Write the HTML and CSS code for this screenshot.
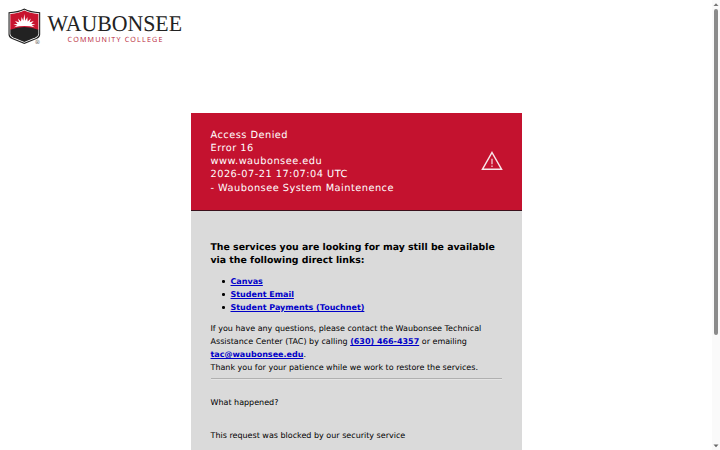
FILE: index.html
```
<!DOCTYPE html>
<html lang="en">
<head>
<meta charset="utf-8">
<title>Access Denied</title>
<link rel="stylesheet" href="styles.css">
</head>
<body>
<div class="page">
  <header class="brand">
    <svg class="logo" width="190" height="42" viewBox="8 7 190 42" role="img" aria-label="Waubonsee Community College">
      <path d="M8.500 12.200Q18 11.700 24.300 8.600Q30.500 11.700 40.200 12.200V34.500Q40 37.500 36.500 39L24.300 43.900L12 39Q8.700 37.500 8.500 34.500Z" fill="#222"/>
      <path d="M9.600 13.200Q18.500 12.700 24.300 9.700Q30.200 12.700 39.100 13.200V34.300Q38.900 36.800 36.200 38L24.300 42.800L12.400 38Q9.800 36.800 9.600 34.300Z" fill="#fff"/>
      <path d="M10.300 13.900Q18.800 13.200 24.300 10.400Q29.900 13.200 38.400 13.900V30H10.300Z" fill="#c8142f"/>
      <path d="M14 27.200L17 25.600L13.300 24.300L17.600 23.900L15 20.900L19 22.200L18 18.500L21 21.400L21.600 17L23.300 20.700L24.300 14L25.400 20.700L27.300 17L27.700 21.400L30.800 18.500L29.700 22.200L33.700 20.900L31.200 23.900L35.400 24.300L31.800 25.600L34.800 27.200Q24.300 25 14 27.200Z" fill="#fff"/>
      <path d="M10.300 29.800Q24.300 24.300 38.400 29.800V34Q38.100 36.300 35.700 37.300L24.300 41.900L12.900 37.300Q10.600 36.300 10.300 34Z" fill="#222"/>
      <text class="mark" x="35.300" y="43.500">®</text>
      <text class="name" x="47.500" y="30.800" textLength="134.500" lengthAdjust="spacingAndGlyphs">WAUBONSEE</text>
      <text class="sub" x="67.500" y="42.200" textLength="95">COMMUNITY COLLEGE</text>
    </svg>
  </header>
  <main class="card">
    <section class="alert">
      <div class="alert-text">
        <div>Access Denied</div>
        <div>Error 16</div>
        <div>www.waubonsee.edu</div>
        <div>2026-07-21 17:07:04 UTC</div>
        <div class="reason">- Waubonsee System Maintenence</div>
      </div>
      <svg class="warning" width="22" height="20" viewBox="0 0 22 20"><path d="M11 1.500L20.500 18.200H1.500Z" fill="none" stroke="#f8e6e9" stroke-width="1.500"/><path d="M11 7.700V13.300M11 14.500V16" stroke="#f3ccd3" stroke-width="1.300"/></svg>
    </section>
    <section class="details">
      <h1>The services you are looking for may still be available<br>via the following direct links:</h1>
      <ul>
        <li><a href="#">Canvas</a></li>
        <li><a href="#">Student Email</a></li>
        <li><a href="#">Student Payments (Touchnet)</a></li>
      </ul>
      <p>If you have any questions, please contact the Waubonsee Technical<br>Assistance Center (TAC) by calling <a href="#">(630) 466-4357</a> or emailing<br><a href="#">tac@waubonsee.edu</a>.<br>Thank you for your patience while we work to restore the services.</p>
      <hr>
      <p class="question">What happened?</p>
      <p class="answer">This request was blocked by our security service</p>
    </section>
  </main>
</div>
<div class="scrollbar">
  <svg width="8" height="9" viewBox="0 0 8 9"><path d="M1.500 6L4 3.200L6.500 6Z" fill="#777"/></svg>
  <div class="thumb"></div>
  <svg class="down" width="8" height="9" viewBox="0 0 8 9"><path d="M1.500 3.500L4 6.200L6.500 3.500Z" fill="#666"/></svg>
</div>
</body>
</html>
```
FILE: styles.css
```
* { box-sizing: border-box; }
body {
  margin: 0;
  height: 450px;
  display: flex;
  overflow: hidden;
  background: #fff;
  color: #000;
  font: 8px/13px "DejaVu Sans", sans-serif;
  text-rendering: geometricPrecision;
}
.page { flex: 1; height: 450px; overflow: hidden; }
.brand { height: 112.500px; padding: 7px 8px; }
.logo { display: block; }
.name { font: 22.500px "Liberation Serif", serif; fill: #222; }
.sub { font: 7.200px "Open Sans", sans-serif; fill: #b82438; }
.mark { font: 6px "Liberation Sans", sans-serif; fill: #444; }
.card { width: 331.500px; margin-left: 190.500px; }
.alert {
  height: 98px;
  padding: 16px 19px 0 20px;
  display: flex;
  justify-content: space-between;
  background: #c4122f;
  border-bottom: 1.500px solid #3a101c;
  color: #fff;
}
.alert-text { font-size: 9.800px; letter-spacing: 0.470px; }
.reason { margin-top: 1px; }
.warning { margin-top: 22.500px; }
.details { height: 400px; padding: 30px 20px; background: #dadada; }
h1 { margin: 0; font-size: 9.360px; line-height: 13px; white-space: nowrap; }
ul { margin: 8.500px 0 8px; padding-left: 20px; list-style: none; }
li { display: flex; align-items: center; }
li::before { content: ""; width: 2.600px; height: 2.600px; margin: 0 6px 0 -8.600px; border-radius: 50%; background: #000; }
p { margin: 0; white-space: nowrap; }
a { color: #0000c8; font-weight: bold; }
hr { margin: 4px 0 0; border: 0; border-top: 1px solid #b0b0b0; border-bottom: 1px solid #e4e4e4; }
.question { margin-top: 16px; }
.answer { margin-top: 20px; }
.scrollbar { width: 8px; height: 450px; display: flex; flex-direction: column; background: #fafafa; }
.scrollbar svg { display: block; }
.thumb { width: 4px; height: 326px; margin-left: 2px; border-radius: 2px; background: #8b8b8b; }
.down { margin-top: auto; }
```
